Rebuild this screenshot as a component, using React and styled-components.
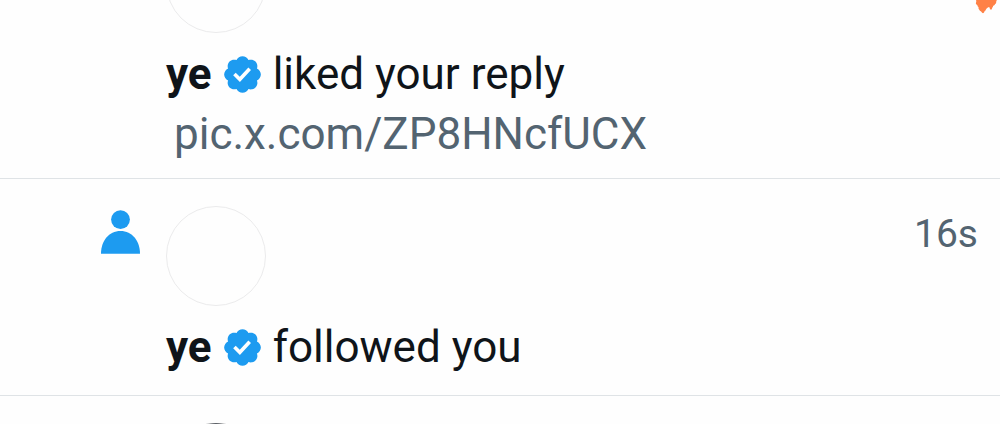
import React from "react";
import styled, { createGlobalStyle } from "styled-components";

const notifications = [
  {
    id: 1,
    name: "ye",
    action: "liked your reply",
    link: "pic.x.com/ZP8HNcfUCX",
  },
  { id: 2, name: "ye", action: "followed you", time: "16s", follow: true },
];

const VerifiedIcon = () => (
  <Badge viewBox="0 0 22 22" role="img" aria-label="Verified account">
    <path d="M20.396 11c-.018-.646-.215-1.275-.57-1.816-.354-.54-.852-.972-1.438-1.246.223-.607.27-1.264.14-1.897-.131-.634-.437-1.218-.882-1.687-.47-.445-1.053-.75-1.687-.882-.633-.13-1.29-.083-1.897.14-.273-.587-.704-1.086-1.245-1.44S11.647 1.62 11 1.604c-.646.017-1.273.213-1.813.568s-.969.854-1.24 1.44c-.608-.223-1.267-.272-1.902-.14-.635.13-1.22.436-1.69.882-.445.47-.749 1.055-.878 1.688-.13.633-.08 1.29.144 1.896-.587.274-1.087.705-1.443 1.245-.356.54-.555 1.17-.574 1.817.02.647.218 1.276.574 1.817.356.54.856.972 1.443 1.245-.224.606-.274 1.263-.144 1.896.13.634.433 1.218.877 1.688.47.443 1.054.747 1.687.878.633.132 1.29.084 1.897-.136.274.586.705 1.084 1.246 1.439.54.354 1.17.551 1.816.569.647-.016 1.276-.213 1.817-.567s.972-.854 1.245-1.44c.604.239 1.266.296 1.903.164.636-.132 1.22-.447 1.68-.907.46-.46.776-1.044.908-1.681s.075-1.299-.165-1.903c.586-.274 1.084-.705 1.439-1.246.354-.54.551-1.17.569-1.816zM9.662 14.85l-3.429-3.428 1.293-1.302 2.072 2.072 4.4-4.794 1.347 1.246z" />
  </Badge>
);

const PersonIcon = () => (
  <Person viewBox="0 0 39 44" aria-hidden="true">
    <circle cx="19.5" cy="9.6" r="9.4" />
    <path d="M0 43.7C0 31 7.8 21 19.5 21S39 31 39 43.7z" />
  </Person>
);

const App = () => {
  return (
    <>
      <GlobalStyle />
      <Feed>
        <Flame viewBox="0 0 24 15" aria-hidden="true">
          <path d="M1 0C2 2 0 3 1.500 4.500C3 5 2 6.500 3.500 7C3 9 4.500 9.500 5 11C6.500 11 6.500 13 8 13.200C9.500 13 9 11 10.500 10.500C11 8.500 12.500 7.500 14 7C15 7.500 14.500 9.500 16 9.800C17.500 9.500 16.500 7.500 18 7C17.500 5.500 20 5.500 20 4C22 3.500 20.500 1.500 22 0z" />
        </Flame>
        <List>
          {notifications.map((item) => (
            <Row key={item.id} $tight={!!item.link}>
              <IconColumn>{item.follow && <PersonIcon />}</IconColumn>
              <Content>
                <Avatar />
                <Message>
                  <Name>{item.name}</Name>
                  <VerifiedIcon />
                  <span>{item.action}</span>
                </Message>
                {item.link && (
                  <MediaLink href={`https://${item.link}`}>{item.link}</MediaLink>
                )}
              </Content>
              {item.time && <Time>{item.time}</Time>}
            </Row>
          ))}
          <Row>
            <IconColumn />
            <Content>
              <Avatar $dark />
            </Content>
          </Row>
        </List>
      </Feed>
    </>
  );
};

export default App;

const GlobalStyle = createGlobalStyle`
  * {
    box-sizing: border-box;
  }
  body {
    margin: 0;
    background: #fefefe;
    color: #0f1419;
    font-family: Roboto, "Liberation Sans", sans-serif;
  }
`;

const Feed = styled.main`
  position: relative;
  height: 100vh;
  overflow: hidden;
`;

/* the list is scrolled part of the way through its first row */
const List = styled.ul`
  margin: -94px 0 0;
  padding: 0;
  list-style: none;
`;

const Row = styled.li`
  display: flex;
  align-items: flex-start;
  padding: 27px 22px ${(props) => (props.$tight ? "14px" : "18px")} 0;
  border-bottom: 1px solid #dfe3e6;
`;

const IconColumn = styled.div`
  display: flex;
  justify-content: flex-end;
  flex: 0 0 166px;
  padding: 4px 26px 0 0;
`;

const Person = styled.svg`
  width: 39px;
  height: 44px;
  fill: #1d9bf0;
`;

const Content = styled.div`
  flex: 1;
  min-width: 0;
`;

const Avatar = styled.div`
  width: 100px;
  height: 100px;
  margin-bottom: 11px;
  border: 1px solid ${(props) => (props.$dark ? "#5c6066" : "#ebebec")};
  border-radius: 50%;
  background: ${(props) => (props.$dark ? "#5c6066" : "#fefefe")};
`;

const Message = styled.div`
  display: flex;
  align-items: center;
  font-size: 44px;
  line-height: 60px;
`;

const Name = styled.strong`
  font-weight: 700;
`;

const Badge = styled.svg`
  width: 43px;
  height: 43px;
  margin: 0 9px;
  fill: #1d9bf0;
`;

const MediaLink = styled.a`
  display: block;
  padding-left: 8px;
  color: #536471;
  font-size: 44px;
  line-height: 60px;
  text-decoration: none;
`;

const Time = styled.time`
  color: #536471;
  font-size: 39px;
  line-height: 56px;
`;

const Flame = styled.svg`
  position: absolute;
  top: 0;
  right: 1px;
  width: 24px;
  height: 15px;
  fill: #ff8146;
`;
